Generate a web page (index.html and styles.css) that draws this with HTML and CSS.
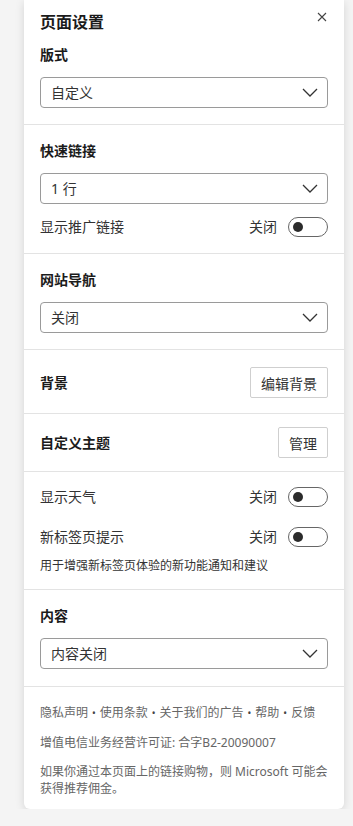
FILE: index.html
```html
<!DOCTYPE html>
<html lang="zh-CN">
<head>
	<meta charset="UTF-8">
	<meta name="viewport" content="width=device-width, initial-scale=1.0">
	<title>页面设置</title>
	<link rel="stylesheet" href="styles.css">
</head>

<body>
	<div class="panel">
		<div class="panel-head">
			<h1 class="panel-title">页面设置</h1>
			<button class="close-btn" aria-label="关闭">
				<svg width="10" height="10" viewBox="0 0 10 10"><path d="M1 1 L9 9 M9 1 L1 9" stroke="#444" stroke-width="1.1" fill="none"/></svg>
			</button>
		</div>

		<section class="section first">
			<div class="label">版式</div>
			<div class="select">
				<span>自定义</span>
				<svg class="chevron" width="16" height="9" viewBox="0 0 16 9"><path d="M1 1 L8 8 L15 1" stroke="#333" stroke-width="1.3" fill="none"/></svg>
			</div>
		</section>

		<section class="section">
			<div class="label">快速链接</div>
			<div class="select">
				<span>1 行</span>
				<svg class="chevron" width="16" height="9" viewBox="0 0 16 9"><path d="M1 1 L8 8 L15 1" stroke="#333" stroke-width="1.3" fill="none"/></svg>
			</div>
			<div class="row toggle-row spaced">
				<span>显示推广链接</span>
				<div class="switch-wrap"><span>关闭</span><span class="switch"></span></div>
			</div>
		</section>

		<section class="section">
			<div class="label">网站导航</div>
			<div class="select">
				<span>关闭</span>
				<svg class="chevron" width="16" height="9" viewBox="0 0 16 9"><path d="M1 1 L8 8 L15 1" stroke="#333" stroke-width="1.3" fill="none"/></svg>
			</div>
		</section>

		<section class="section bg-section">
			<div class="row">
				<span class="label">背景</span>
				<button class="btn">编辑背景</button>
			</div>
		</section>

		<section class="section theme-section">
			<div class="row">
				<span class="label">自定义主题</span>
				<button class="btn">管理</button>
			</div>
		</section>

		<section class="section toggles">
			<div class="row toggle-row">
				<span>显示天气</span>
				<div class="switch-wrap"><span>关闭</span><span class="switch"></span></div>
			</div>
			<div class="row toggle-row">
				<span>新标签页提示</span>
				<div class="switch-wrap"><span>关闭</span><span class="switch"></span></div>
			</div>
			<p class="hint">用于增强新标签页体验的新功能通知和建议</p>
		</section>

		<section class="section content-section">
			<div class="label">内容</div>
			<div class="select">
				<span>内容关闭</span>
				<svg class="chevron" width="16" height="9" viewBox="0 0 16 9"><path d="M1 1 L8 8 L15 1" stroke="#333" stroke-width="1.3" fill="none"/></svg>
			</div>
		</section>

		<footer class="section footer">
			<p>隐私声明<span class="dot">•</span>使用条款<span class="dot">•</span>关于我们的广告<span class="dot">•</span>帮助<span class="dot">•</span>反馈</p>
			<p>增值电信业务经营许可证: 合字B2-20090007</p>
			<p>如果你通过本页面上的链接购物，则 Microsoft 可能会<br>获得推荐佣金。</p>
		</footer>
	</div>
</body>

</html>
```

FILE: styles.css
```css
body,
html {
	margin: 0;
	padding: 0;
}

body {
	background-color: #f4f4f4;
	font-family: "Noto Sans", "Noto Sans CJK SC", sans-serif;
	font-size: 14px;
	color: #333;
}

*,
*::after,
*::before {
	box-sizing: border-box;
}

.panel {
	width: 320px;
	margin-left: 24px;
	padding-top: 11px;
	background-color: #fff;
	border-radius: 0 0 6px 6px;
	box-shadow: 0 2px 10px rgba(0, 0, 0, 0.13);
}

.panel-head {
	display: flex;
	justify-content: space-between;
	align-items: flex-start;
	padding: 0 16px;
	margin-bottom: 12px;
}

.panel-title {
	margin: 0;
	font-size: 16px;
	line-height: 22px;
	font-weight: 700;
	color: #1b1b1b;
}

.close-btn {
	display: flex;
	margin: 1px 1px 0 0;
	padding: 0;
	border: none;
	background: none;
	cursor: pointer;
}

.section {
	padding: 16px;
	border-top: 1px solid #e3e3e3;
}

.section.first {
	padding-top: 0;
	border-top: none;
}

.label {
	font-weight: 700;
	line-height: 20px;
	color: #1b1b1b;
	margin-bottom: 12px;
}

.row .label {
	margin-bottom: 0;
}

.select {
	display: flex;
	justify-content: space-between;
	align-items: center;
	height: 31px;
	padding: 0 9px 0 10px;
	border: 1px solid #9a9a9a;
	border-radius: 4px;
	line-height: 20px;
}

.row {
	display: flex;
	justify-content: space-between;
	align-items: center;
}

.toggle-row {
	height: 20px;
	line-height: 20px;
}

.toggle-row + .toggle-row {
	margin-top: 20px;
}

.spaced {
	margin-top: 13px;
}

.switch-wrap {
	display: flex;
	align-items: center;
	gap: 11px;
}

.switch {
	position: relative;
	width: 40px;
	height: 20px;
	border: 1px solid #666;
	border-radius: 10px;
}

.switch::after {
	content: "";
	position: absolute;
	left: 4px;
	top: 4px;
	width: 10px;
	height: 10px;
	border-radius: 50%;
	background-color: #2b2b2b;
}

.btn {
	height: 31px;
	padding: 0 10px;
	font-family: inherit;
	font-size: 14px;
	color: #333;
	background-color: #fff;
	border: 1px solid #cfcfcf;
	border-radius: 2px;
	cursor: pointer;
}

.bg-section {
	padding-top: 17px;
	padding-bottom: 15px;
}

.theme-section {
	padding-top: 13px;
	padding-bottom: 13px;
}

.toggles {
	padding-top: 15px;
	padding-bottom: 15px;
}

.hint {
	margin: 11px 0 0;
	font-size: 12px;
	line-height: 16px;
	color: #333;
}

.content-section {
	padding-bottom: 17px;
}

.footer {
	padding-top: 17px;
	padding-bottom: 12px;
	font-size: 12px;
	line-height: 17px;
	color: #666;
}

.footer p {
	margin: 0 0 12px;
}

.footer p:last-child {
	margin-bottom: 0;
}

.dot {
	margin: 0 4px;
	font-size: 10px;
	color: #444;
}
```
